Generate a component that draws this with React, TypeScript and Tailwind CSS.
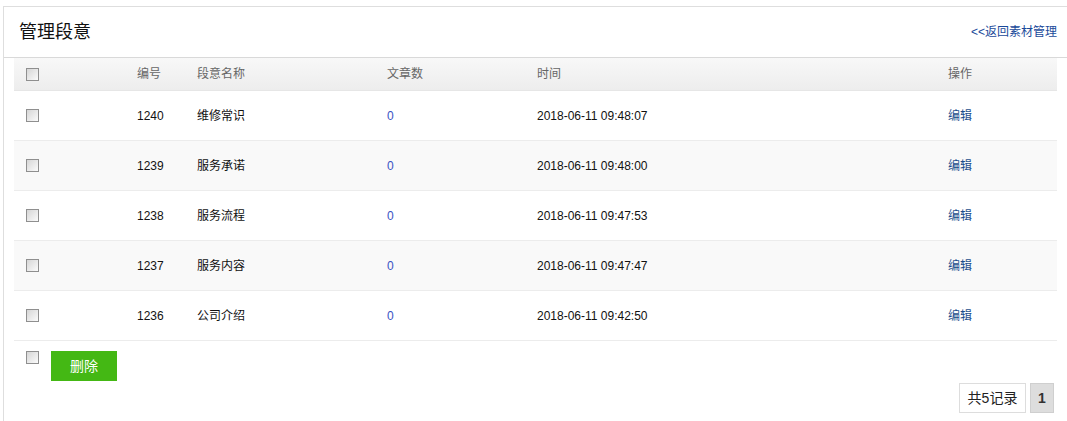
import React from 'react';

type Row = { id: number; name: string; count: number; time: string };

const rows: Row[] = [
  { id: 1240, name: '维修常识', count: 0, time: '2018-06-11 09:48:07' },
  { id: 1239, name: '服务承诺', count: 0, time: '2018-06-11 09:48:00' },
  { id: 1238, name: '服务流程', count: 0, time: '2018-06-11 09:47:53' },
  { id: 1237, name: '服务内容', count: 0, time: '2018-06-11 09:47:47' },
  { id: 1236, name: '公司介绍', count: 0, time: '2018-06-11 09:42:50' },
];

const cols = 'grid grid-cols-[123px_60px_190px_150px_411px_1fr] items-center';

function Box() {
  return (
    <span className="block h-[13px] w-[13px] border border-[#8f8f8f] bg-gradient-to-br from-[#d6d6d6] to-[#fbfbfb]" />
  );
}

export default function App() {
  return (
    <div
      className="h-[421px] overflow-hidden bg-white pl-[3px] pt-[6px] text-[12px] text-[#222]"
      style={{ fontFamily: '"Liberation Sans", "Noto Sans CJK SC", sans-serif' }}
    >
      <div className="h-full border-l border-t border-[#dedede]">
        <div className="flex h-[51px] items-center justify-between border-b border-[#d9d9d9] pl-[15px] pr-[10px]">
          <h1 className="text-[18px] text-[#111]">管理段意</h1>
          <a className="text-[12px] text-[#1a4a9a]">&lt;&lt;返回素材管理</a>
        </div>

        <div className="px-[10px]">
          <div
            className={`${cols} h-[33px] border-b border-[#e6e6e6] bg-gradient-to-b from-[#f8f8f8] to-[#ededed] text-[#666]`}
          >
            <div className="pl-[12px]">
              <Box />
            </div>
            <div>编号</div>
            <div>段意名称</div>
            <div>文章数</div>
            <div>时间</div>
            <div>操作</div>
          </div>

          {rows.map((r, i) => (
            <div
              key={r.id}
              className={`${cols} h-[50px] border-b border-[#ececec] ${i % 2 === 1 ? 'bg-[#f9f9f9]' : 'bg-white'}`}
            >
              <div className="pl-[12px]">
                <Box />
              </div>
              <div className="text-[#111]">{r.id}</div>
              <div className="text-[#111]">{r.name}</div>
              <div className="text-[#3a52c4]">{r.count}</div>
              <div className="text-[#111]">{r.time}</div>
              <div className="text-[#1c4e8c]">编辑</div>
            </div>
          ))}

          <div className="flex items-start gap-[12px] pl-[12px] pt-[10px]">
            <Box />
            <button
              type="button"
              className="h-[30px] w-[66px] bg-[#44b814] text-[14px] text-white"
            >
              删除
            </button>
          </div>

          <div className="mt-[2px] flex justify-end gap-[4px] pr-[3px] text-[14px]">
            <span className="flex h-[30px] w-[67px] items-center justify-center border border-[#dddddd] text-[#222]">
              共5记录
            </span>
            <span className="flex h-[30px] w-[24px] items-center justify-center border border-[#cfcfcf] bg-[#dddddd] font-bold text-[#333]">
              1
            </span>
          </div>
        </div>
      </div>
    </div>
  );
}
